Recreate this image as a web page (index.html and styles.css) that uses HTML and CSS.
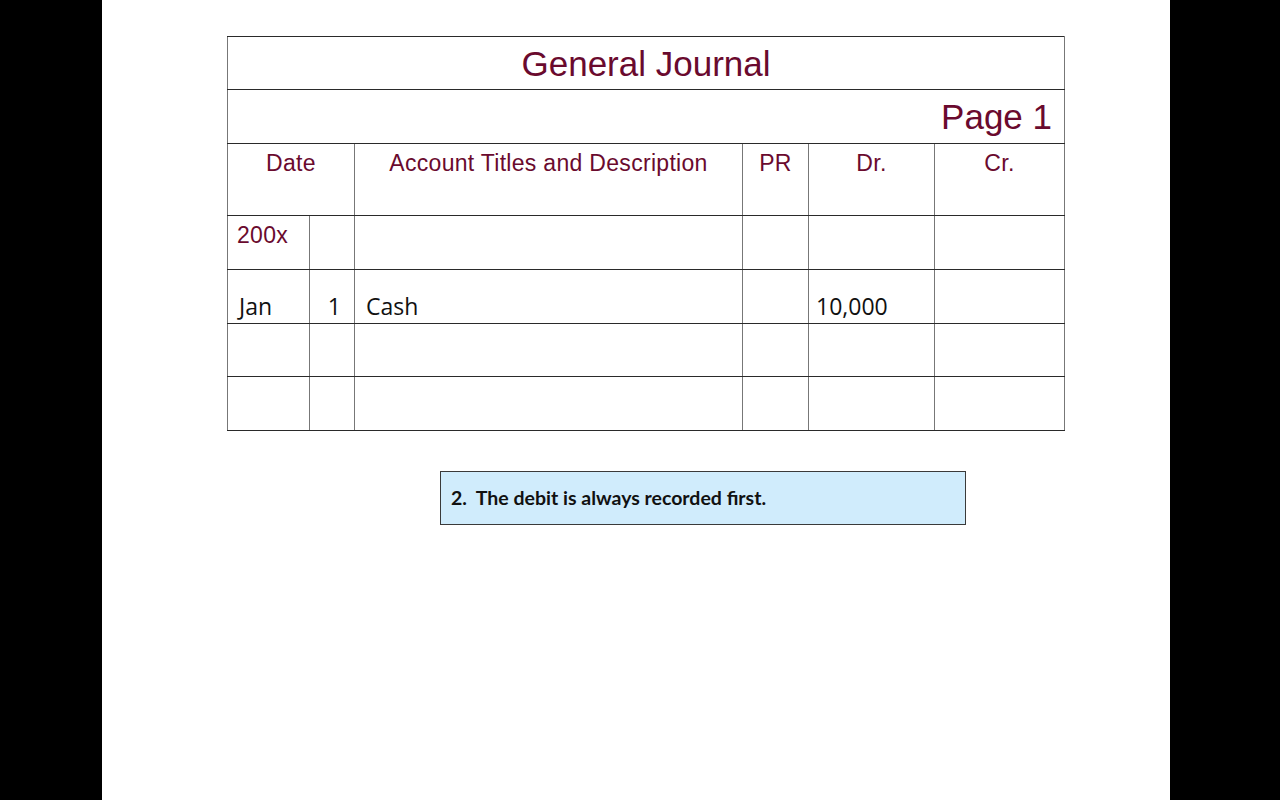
FILE: index.html
```html
<!DOCTYPE html>
<html>
<head>
<meta charset="utf-8">
<link rel="stylesheet" href="styles.css">
</head>
<body>
<div class="slide">
  <table class="journal">
    <colgroup>
      <col class="c-month"><col class="c-day"><col class="c-acct"><col class="c-pr"><col class="c-dr"><col class="c-cr">
    </colgroup>
    <tr class="r-title"><td colspan="6" class="title">General Journal</td></tr>
    <tr class="r-page"><td colspan="6" class="page">Page 1</td></tr>
    <tr class="r-head">
      <td colspan="2" class="head">Date</td>
      <td class="head">Account Titles and Description</td>
      <td class="head">PR</td>
      <td class="head">Dr.</td>
      <td class="head">Cr.</td>
    </tr>
    <tr class="r-body">
      <td class="year">200x</td><td></td><td></td><td></td><td></td><td></td>
    </tr>
    <tr class="r-body">
      <td class="entry">Jan</td><td class="entry num">1</td><td class="entry">Cash</td><td></td><td class="entry amount">10,000</td><td></td>
    </tr>
    <tr class="r-body r-short"><td></td><td></td><td></td><td></td><td></td><td></td></tr>
    <tr class="r-body"><td></td><td></td><td></td><td></td><td></td><td></td></tr>
  </table>
  <div class="note-row">
    <div class="note">2.&nbsp; The debit is always recorded first.</div>
  </div>
</div>
</body>
</html>
```

FILE: styles.css
```css
html, body {
  margin: 0;
  padding: 0;
  background: #000;
  height: 100%;
}

.slide {
  margin-left: 102px;
  width: 1068px;
  height: 800px;
  background: #fff;
  padding: 36px 0 0 125px;
  box-sizing: border-box;
}

.journal {
  border-collapse: collapse;
  table-layout: fixed;
  width: 838px;
  font-family: "Liberation Sans", Arial, sans-serif;
  color: #6a0a2e;
}

.c-month { width: 82px; }
.c-day { width: 45px; }
.c-acct { width: 388px; }
.c-pr { width: 66px; }
.c-dr { width: 126px; }
.c-cr { width: 130px; }

.journal td {
  border-left: 1px solid #777;
  border-right: 1px solid #777;
  border-top: 1px solid #2a2a2a;
  border-bottom: 1px solid #2a2a2a;
  padding: 0;
  box-sizing: border-box;
}

.r-title td { height: 53px; }
.r-page td { height: 54px; }
.r-head td { height: 72px; }
.r-body td { height: 54px; }
.r-body.r-short td { height: 53px; }

.title {
  text-align: center;
  font-size: 35px;
  vertical-align: middle;
  padding-top: 1px !important;
}

.page {
  text-align: right;
  font-size: 35px;
  padding-right: 12px !important;
  vertical-align: middle;
  padding-top: 1px !important;
}

.head {
  text-align: center;
  vertical-align: top;
  font-size: 23px;
  letter-spacing: 0.3px;
  padding-top: 6px !important;
}

.year {
  vertical-align: top;
  font-size: 23px;
  letter-spacing: 0.3px;
  padding: 6px 0 0 9px !important;
}

.entry {
  vertical-align: bottom;
  font-family: "Open Sans", "Lato", sans-serif;
  font-size: 23px;
  color: #111;
  padding: 0 0 1px 11px !important;
}

.entry.amount {
  padding-left: 7px !important;
}

.entry.num {
  text-align: right;
  padding: 0 13px 1px 0 !important;
}

.note-row {
  padding: 40px 0 0 213px;
}

.note {
  width: 526px;
  height: 54px;
  box-sizing: border-box;
  background: #d0ecfc;
  border: 1px solid #3a3a3a;
  font-family: "Lato", "Open Sans", sans-serif;
  font-weight: bold;
  font-size: 19.5px;
  color: #111;
  display: flex;
  align-items: center;
  padding: 0 0 2px 10px;
}
```
